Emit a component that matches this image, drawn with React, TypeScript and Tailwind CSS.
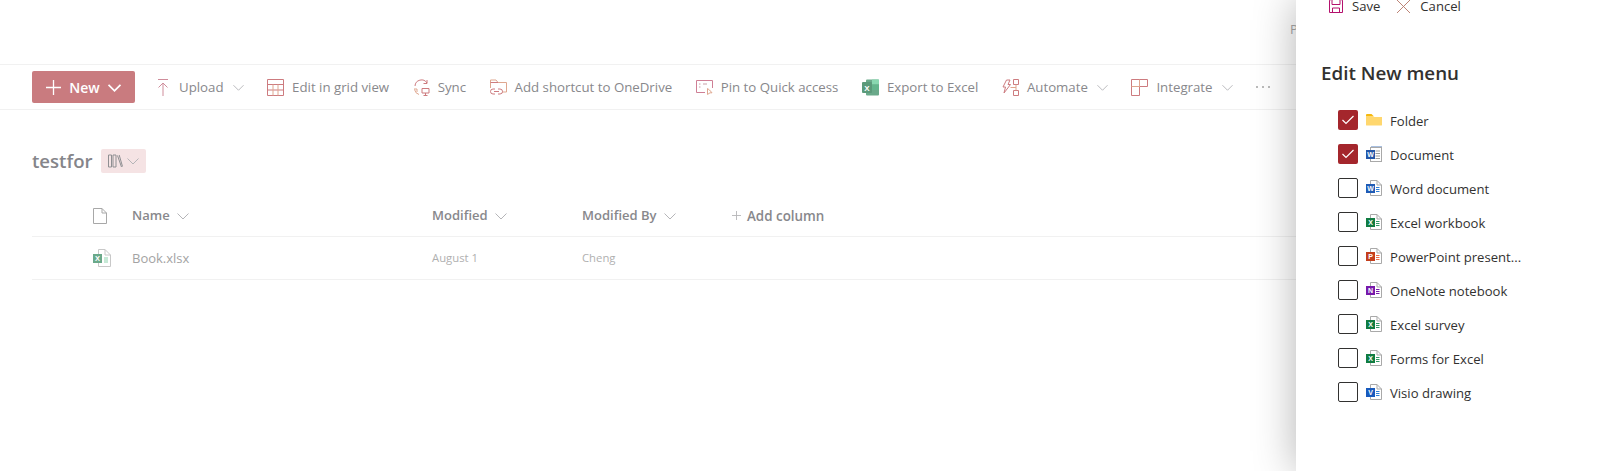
import React from 'react';

const Chevron = ({ className = 'w-[12px] h-[12px] text-[#b5b5b8]', weight = 1 }: { className?: string; weight?: number }) => (
  <svg viewBox="0 0 12 12" className={className} fill="none" stroke="currentColor" strokeWidth={weight}>
    <path d="M0.5 3.5 L6 9 L11.5 3.5" />
  </svg>
);

const UploadIcon = () => (
  <svg viewBox="0 0 12 17" className="w-[12px] h-[17px]" fill="none" stroke="#cf8d9b" strokeWidth="1">
    <path d="M1 .5 H11 M6 17 V4 M1.5 8.5 L6 4 L10.5 8.5" />
  </svg>
);

const GridIcon = () => (
  <svg viewBox="0 0 17 17" className="w-[17px] h-[17px]" fill="none" strokeWidth="1">
    <path d="M.5.5 H16.5 V16.5 H.5 Z M.5 5.5 H16.5 M.5 11 H16.5" stroke="#cd7b7f" />
    <path d="M6 5.5 V16.5 M11 5.5 V16.5" stroke="#dfa78f" />
  </svg>
);

const SyncIcon = () => (
  <svg viewBox="0 0 17 17" className="w-[17px] h-[17px]" fill="none" strokeWidth="1">
    <path d="M2 7 A6.5 6.5 0 0 1 14 4 M14 1 V4.5 H10.5" stroke="#cd7b7f" />
    <path d="M1 10 H4 V13 M1.5 10.5 A6.5 6.5 0 0 0 6 15.5" stroke="#dfa78f" />
    <path d="M9 9.5 H16 V14 H9 Z M12.5 14 V16.5 M10.5 16.5 H14.5" stroke="#cd7b7f" />
  </svg>
);

const ShortcutIcon = () => (
  <svg viewBox="0 0 17 17" className="w-[17px] h-[17px]" fill="none" strokeWidth="1">
    <path d="M.5 9 V1 H6 L8 3.5 H16.5 V13 H12" stroke="#dfa78f" />
    <path d="M.5 3.5 H8" stroke="#cd7b7f" />
    <path d="M5 10 H3 A2.5 2.5 0 0 0 3 15 H5 M8 10 H10 A2.5 2.5 0 0 1 10 15 H8 M4 12.5 H9" stroke="#cd7b7f" />
  </svg>
);

const PinIcon = () => (
  <svg viewBox="0 0 17 17" className="w-[17px] h-[17px]" fill="none" strokeWidth="1">
    <path d="M9 13.5 H.5 V1.5 H16.5 V9" stroke="#cf7f95" />
    <path d="M3 5 H4.5 M3 8 H4.5 M7 5 H11" stroke="#c9a0a8" />
    <path d="M11.5 9.5 V15.5 L14 13.8 H16 L13.5 11 Z" stroke="#dfa78f" />
  </svg>
);

const ExcelExportIcon = () => (
  <svg viewBox="0 0 17 17" className="w-[17px] h-[17px]">
    <rect x="4" y="0.5" width="13" height="16" rx="1" fill="#6aa98a" />
    <rect x="10" y="0.5" width="7" height="5" fill="#88d8b0" />
    <rect x="10" y="5.5" width="7" height="5.5" fill="#63b58c" />
    <rect x="0" y="3" width="10" height="11" rx="1" fill="#5b9a7a" />
    <text x="5" y="11.5" textAnchor="middle" fontSize="8" fontWeight="700" fill="#fff" fontFamily="'Liberation Sans', sans-serif">X</text>
  </svg>
);

const AutomateIcon = () => (
  <svg viewBox="0 0 17 17" className="w-[17px] h-[17px]" fill="none" strokeWidth="1">
    <path d="M4.5 1 H8 L6 5.5 H8.5 L2 14 L3.5 8 H1 Z" stroke="#cd7b7f" />
    <path d="M11.5.5 H16.5 V5.5 H11.5 Z M11.5 11.5 H16.5 V16.5 H11.5 Z" stroke="#cd7b7f" />
    <path d="M14 5.5 V11.5 M8.5 8.5 H14" stroke="#dfa78f" />
  </svg>
);

const IntegrateIcon = () => (
  <svg viewBox="0 0 17 17" className="w-[17px] h-[17px]" fill="none" strokeWidth="1">
    <path d="M.5.5 H16.5 V7.5 H8.5 V16.5 H.5 Z" stroke="#cd7b7f" />
    <path d="M.5 7.5 H8.5 M8.5.5 V7.5" stroke="#dfa78f" />
  </svg>
);

const LibraryIcon = () => (
  <svg viewBox="0 0 15 14" className="w-[15px] h-[14px]" fill="none" stroke="#8f8f92" strokeWidth="1">
    <path d="M.5 1 H3.5 V13 H.5 Z M5 1 H8 V13 H5 Z M9.5 1.5 L13.5 13" />
    <path d="M11.2 1 L14.5 12.5" />
  </svg>
);

// the little page with a coloured tile on it, used for every office type
const OfficeIcon = ({ color, letter, lines = '#4a7fc4' }: { color: string; letter: string; lines?: string }) => (
  <svg viewBox="0 0 16 16" className="w-[16px] h-[16px] shrink-0">
    <path d="M4.5.5 H11 L15.5 5 V15.5 H4.5 Z" fill="#fff" stroke="#a9a9a9" />
    <path d="M11 .5 V5 H15.5" fill="none" stroke="#a9a9a9" />
    <path d="M10 7.5 H13.5 M10 9.5 H13.5 M10 11.5 H13.5" stroke={lines} />
    <rect x="0" y="4" width="9" height="9" fill={color} />
    <text x="4.5" y="11" textAnchor="middle" fontSize="7" fontWeight="700" fill="#fff" fontFamily="'Liberation Sans', sans-serif">{letter}</text>
  </svg>
);

const FolderIcon = () => (
  <svg viewBox="0 0 16 16" className="w-[16px] h-[16px] shrink-0">
    <path d="M0 3 Q0 2 1 2 H5.5 L7.5 4 H0 Z" fill="#f5b90f" />
    <path d="M0 4 H7 L8.5 5 H16 V13 Q16 13.5 15 13.5 H1 Q0 13.5 0 13 Z" fill="#ffd76e" />
  </svg>
);

const DocumentIcon = () => (
  <svg viewBox="0 0 16 16" className="w-[16px] h-[16px] shrink-0">
    <rect x="5" y="0" width="11" height="2" fill="#a8bfe0" />
    <rect x="4.5" y="1.5" width="11" height="14" fill="#fff" stroke="#a9a9a9" />
    <path d="M9.5 5 H14 M9.5 7.5 H14 M9.5 10 H14 M9.5 12.5 H14" stroke="#9a9a9a" />
    <rect x="0" y="4" width="9" height="9" fill="#2356a8" />
    <text x="4.5" y="11" textAnchor="middle" fontSize="7" fontWeight="700" fill="#fff" fontFamily="'Liberation Sans', sans-serif">W</text>
  </svg>
);

const toolbarItems = [
  { label: 'Upload', icon: <UploadIcon />, menu: true },
  { label: 'Edit in grid view', icon: <GridIcon /> },
  { label: 'Sync', icon: <SyncIcon /> },
  { label: 'Add shortcut to OneDrive', icon: <ShortcutIcon /> },
  { label: 'Pin to Quick access', icon: <PinIcon /> },
  { label: 'Export to Excel', icon: <ExcelExportIcon /> },
  { label: 'Automate', icon: <AutomateIcon />, menu: true },
  { label: 'Integrate', icon: <IntegrateIcon />, menu: true },
];

const menuItems = [
  { label: 'Folder', checked: true, icon: <FolderIcon /> },
  { label: 'Document', checked: true, icon: <DocumentIcon /> },
  { label: 'Word document', icon: <OfficeIcon color="#1f5bb5" letter="W" lines="#2f7fd6" /> },
  { label: 'Excel workbook', icon: <OfficeIcon color="#107c41" letter="X" lines="#2f9a64" /> },
  { label: 'PowerPoint present...', icon: <OfficeIcon color="#c43e1c" letter="P" lines="#ed6c47" /> },
  { label: 'OneNote notebook', icon: <OfficeIcon color="#7719aa" letter="N" lines="#7719aa" /> },
  { label: 'Excel survey', icon: <OfficeIcon color="#107c41" letter="X" lines="#2f9a64" /> },
  { label: 'Forms for Excel', icon: <OfficeIcon color="#107c41" letter="X" lines="#2f9a64" /> },
  { label: 'Visio drawing', icon: <OfficeIcon color="#185abd" letter="V" lines="#2f7fd6" /> },
];

export default function App() {
  return (
    <div className="relative w-full h-screen overflow-hidden bg-white font-['Open_Sans',sans-serif]">
      {/* header strip, mostly hidden under the panel */}
      <div className="h-[64px] pl-[1290px] pt-[19px] text-[13px] leading-[20px] text-[#a8a8a8] whitespace-nowrap">Private group</div>

      {/* command bar */}
      <div className="h-[46px] border-y border-[#f1f1f1] pl-[32px] flex items-center whitespace-nowrap text-[13.25px] text-[#88888c]">
        <button className="w-[103px] h-[32px] mr-[19px] rounded-[2px] bg-[#c97b7f] flex items-center justify-center gap-[8px] text-white font-semibold text-[14px]">
          <svg viewBox="0 0 16 16" className="w-[15px] h-[15px]" fill="none" stroke="#fff" strokeWidth="1.4">
            <path d="M8 0 V16 M0 8 H16" />
          </svg>
          New
          <Chevron className="w-[13px] h-[13px]" weight={1.6} />
        </button>
        <div className="flex items-center gap-[23.5px]">
          {toolbarItems.map((item) => (
            <div key={item.label} className="flex items-center">
              <span className="w-[17px] flex justify-center mr-[8px]">{item.icon}</span>
              <span className="pt-[2px]">{item.label}</span>
              {item.menu && <span className="ml-[9px] flex"><Chevron className="w-[11px] h-[11px] text-[#b5b5b8]" /></span>}
            </div>
          ))}
          <div className="flex gap-[4px]">
            <span className="w-[2px] h-[2px] rounded-full bg-[#a5a5a5]" />
            <span className="w-[2px] h-[2px] rounded-full bg-[#a5a5a5]" />
            <span className="w-[2px] h-[2px] rounded-full bg-[#a5a5a5]" />
          </div>
        </div>
      </div>

      {/* library title */}
      <div className="pl-[32px] pt-[38px] flex items-center">
        <span className="text-[18.6px] font-semibold text-[#85858a] leading-[26px]">testfor</span>
        <span className="ml-[8px] w-[45px] h-[24px] rounded-[2px] bg-[#f5e3e4] flex items-center pl-[7px] gap-[4px]">
          <LibraryIcon />
          <Chevron />
        </span>
      </div>

      {/* list */}
      <div className="mx-[32px] mt-[14px]">
        <div className="h-[49px] pt-[8px] border-b border-[#f1f1f1] flex items-center text-[13px] font-semibold text-[#88888c]">
          <span className="w-[100px] pl-[61px]">
            <svg viewBox="0 0 14 16" className="w-[14px] h-[16px]" fill="none" stroke="#a8a8a8">
              <path d="M.5.5 H9 L13.5 5 V15.5 H.5 Z M9 .5 V5 H13.5" />
            </svg>
          </span>
          <div className="w-[300px] flex items-center gap-[7px]">Name <Chevron /></div>
          <div className="w-[150px] flex items-center gap-[7px]">Modified <Chevron /></div>
          <div className="w-[150px] flex items-center gap-[8px]">Modified By <Chevron /></div>
          <div className="flex items-center gap-[6px] text-[13.4px]">
            <svg viewBox="0 0 10 10" className="w-[9px] h-[9px]" fill="none" stroke="#b5b5b8"><path d="M5 0 V10 M0 5 H10" /></svg>
            Add column
          </div>
        </div>
        <div className="h-[43px] border-b border-[#f1f1f1] flex items-center text-[12px] text-[#b0b0b0]">
          <span className="w-[100px] pl-[61px]">
            <svg viewBox="0 0 18 18" className="w-[18px] h-[18px]">
              <path d="M5.5.5 H12 L17.5 6 V17.5 H5.5 Z" fill="#fff" stroke="#c8c8c8" />
              <path d="M12 .5 V6 H17.5" fill="none" stroke="#c8c8c8" />
              <path d="M11 9 H15 M11 11 H15 M11 13 H15" stroke="#8fd3ae" />
              <rect x="0" y="5" width="9" height="9" fill="#6aa98a" />
              <text x="4.5" y="12.4" textAnchor="middle" fontSize="7.5" fontWeight="700" fill="#fff" fontFamily="'Liberation Sans', sans-serif">X</text>
            </svg>
          </span>
          <span className="w-[300px] pt-[2px] text-[13px] text-[#a3a3a3]">Book.xlsx</span>
          <span className="w-[150px] text-[11.3px]">August 1</span>
          <span className="text-[11.3px]">Cheng</span>
        </div>
      </div>

      {/* edit new menu panel */}
      <div className="absolute top-0 bottom-0 right-0 w-[310px] bg-white shadow-[0_0_40px_rgba(0,0,0,0.3)] pl-[25px] text-[13.1px] text-[#323130] whitespace-nowrap">
        <div className="-mt-[8px] h-[28px] pl-[8px] flex items-center leading-[12px]">
          <svg viewBox="0 0 14 14" className="w-[14px] h-[14px] mr-[9px]" fill="none" stroke="#b4116d" strokeWidth="1">
            <path d="M.5 2 Q.5.5 2 .5 H12 Q13.5.5 13.5 2 V13.5 H.5 Z M3 .5 V5.5 H11 V.5 M3.5 13.5 V9 H10.5 V13.5" />
          </svg>
          <span>Save</span>
          <svg viewBox="0 0 14 14" className="w-[13px] h-[13px] ml-[17px] mr-[10px]" fill="none" stroke="#b87a6b">
            <path d="M0 0 L14 14 M14 0 L0 14" />
          </svg>
          <span>Cancel</span>
        </div>
        <h2 className="mt-[40px] text-[18.8px] leading-[26px] font-semibold text-[#323130]">Edit New menu</h2>
        <div className="mt-[24px] pl-[17px] flex flex-col gap-[14px]">
          {menuItems.map((item) => (
            <div key={item.label} className="h-[20px] flex items-center">
              {item.checked ? (
                <span className="w-[20px] h-[20px] rounded-[2px] bg-[#a4262c] flex items-center justify-center">
                  <svg viewBox="0 0 12 10" className="w-[12px] h-[10px]" fill="none" stroke="#fff" strokeWidth="1.2"><path d="M.5 5 L4 8.5 L11.5 1" /></svg>
                </span>
              ) : (
                <span className="w-[20px] h-[20px] rounded-[2px] border border-[#323130]" />
              )}
              <span className="ml-[8px] mr-[8px]">{item.icon}</span>
              <span className="pt-[3px]">{item.label}</span>
            </div>
          ))}
        </div>
      </div>
    </div>
  );
}
